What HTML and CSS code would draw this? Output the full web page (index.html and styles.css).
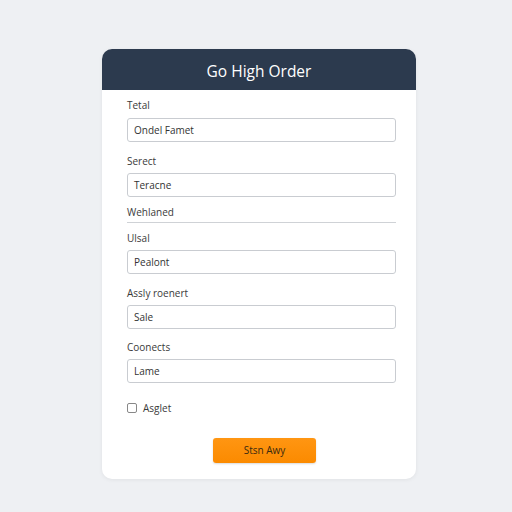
FILE: index.html
```html
<!DOCTYPE html>
<html>
<head>
<meta charset="utf-8">
<link rel="stylesheet" href="styles.css">
</head>
<body>
<div class="page">
  <div class="card">
    <div class="header">Go High Order</div>
    <div class="body">
      <div class="label first">Tetal</div>
      <div class="input">Ondel Famet</div>
      <div class="label">Serect</div>
      <div class="input">Teracne</div>
      <div class="label sec">Wehlaned</div>
      <div class="rule"></div>
      <div class="label after-rule">Ulsal</div>
      <div class="input">Pealont</div>
      <div class="label">Assly roenert</div>
      <div class="input">Sale</div>
      <div class="label">Coonects</div>
      <div class="input">Lame</div>
      <label class="check"><span class="box"></span><span>Asglet</span></label>
      <div class="actions"><button class="btn">Stsn Awy</button></div>
    </div>
  </div>
</div>
</body>
</html>
```
FILE: styles.css
```css
* { box-sizing: border-box; }
html, body { margin: 0; padding: 0; }
body {
  width: 512px; height: 512px;
  background: #eef0f3;
  font-family: "Open Sans", "Noto Sans", sans-serif;
  color: #333;
}
.page { padding-top: 49px; padding-left: 102px; }
.card {
  width: 314px;
  height: 430px;
  background: #fff;
  border-radius: 10px;
  box-shadow: 0 1px 4px rgba(0,0,0,0.06);
  overflow: hidden;
}
.header {
  height: 41px;
  background: #2c3a4e;
  color: #fff;
  font-size: 15.5px;
  font-weight: 500;
  display: flex; align-items: center; justify-content: center;
  padding-top: 2px;
}
.body {
  display: flex; flex-direction: column;
  padding: 0 20px 0 25px;
}
.label {
  font-size: 10px;
  line-height: 14px;
  height: 14px;
  color: #3a3a3a;
  margin-top: 11.5px;
  margin-bottom: 5px;
}
.label.first { margin-top: 8px; margin-bottom: 6px; }
.label.sec { margin-top: 8px; margin-bottom: 3px; }
.label.after-rule { margin-top: 8.5px; }
.rule { height: 1px; background: #cfd2d6; }
.input {
  height: 24px;
  border: 1px solid #c9ccd1;
  border-radius: 3px;
  font-size: 10px;
  line-height: 22px;
  padding-left: 6px;
  color: #333;
}
.check {
  display: flex; align-items: center; gap: 6px;
  margin-top: 17.5px; height: 14px;
  font-size: 10px; color: #3a3a3a;
}
.box {
  width: 10px; height: 10px;
  border: 1px solid #888;
  border-radius: 2px;
  background: #fff;
}
.actions { display: flex; padding-left: 86px; margin-top: 23px; }
.btn {
  width: 103px; height: 25px;
  border: none; border-radius: 3px;
  background: linear-gradient(#ff9612, #fb8a00);
  color: #3a2a10;
  font-family: "Open Sans", sans-serif;
  font-size: 10px;
  box-shadow: 0 1px 2px rgba(0,0,0,0.15);
}
```
